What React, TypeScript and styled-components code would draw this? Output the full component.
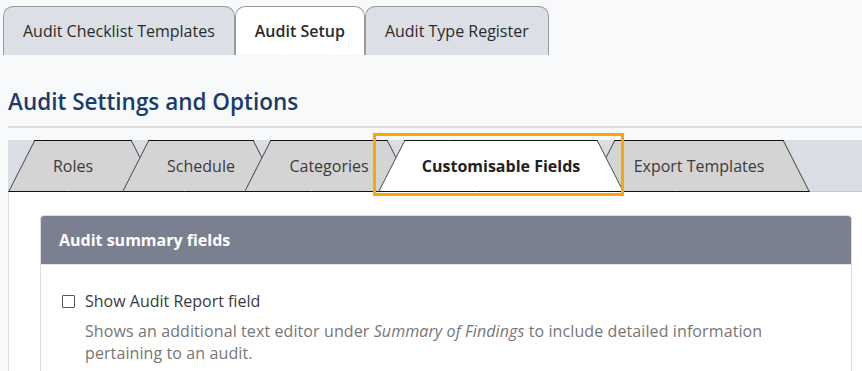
import React from 'react';
import styled, { createGlobalStyle } from 'styled-components';

const GlobalStyle = createGlobalStyle`
  html, body {
    margin: 0;
    overflow: hidden;
    background: #f8f9fb;
    font-family: 'Open Sans', 'Liberation Sans', sans-serif;
  }
`;

const Page = styled.div`
  width: 884px;
`;

const TopTabs = styled.nav`
  display: flex;
  padding: 6px 0 0 3px;
`;

const TopTab = styled.div<{ $active?: boolean }>`
  display: flex;
  align-items: center;
  height: 49px;
  box-sizing: border-box;
  padding: 0 19px;
  border: 1px solid #9a9a9a;
  border-bottom: none;
  border-radius: 10px 10px 0 0;
  background: ${(p) => (p.$active ? '#ffffff' : '#dcdfe6')};
  color: #2b2b2b;
  font-size: 16px;
  font-weight: ${(p) => (p.$active ? 600 : 400)};
`;

const Main = styled.main`
  padding-left: 8px;
`;

const Heading = styled.h1`
  margin: 32px 0 0;
  font-size: 22.5px;
  line-height: 30px;
  font-weight: 600;
  color: #1b3b6b;
`;

const Rule = styled.div`
  height: 2px;
  margin-top: 9px;
  background: #dedede;
`;

const SubTabStrip = styled.div`
  display: flex;
  height: 52px;
  margin-top: 12px;
  background: #dadde4;
  box-shadow: inset 0 -1px 0 #c9c9c9;
`;

const SubTab = styled.div<{ $width: number; $active?: boolean; $order: number }>`
  position: relative;
  z-index: ${(p) => (p.$active ? 20 : p.$order)};
  display: flex;
  align-items: center;
  justify-content: center;
  box-sizing: border-box;
  width: ${(p) => p.$width}px;
  height: 52px;
  margin-left: -36px;
  padding-bottom: 1px;
  font-size: 16px;
  font-weight: ${(p) => (p.$active ? 700 : 400)};
  color: ${(p) => (p.$active ? '#222' : '#3a3a3a')};

  &:first-child {
    margin-left: 0;
    padding-right: 20px;
  }

  &::before,
  &::after {
    content: '';
    position: absolute;
    z-index: -1;
    top: 0;
    bottom: 0;
    width: 60%;
    box-sizing: border-box;
    background: ${(p) => (p.$active ? '#ffffff' : '#d4d4d4')};
    border-top: 1px solid #111;
    border-bottom: 1px solid #111;
  }

  &::before {
    left: 0;
    transform-origin: bottom left;
    transform: skewX(-27deg);
    border-left: 1px solid #444;
  }

  &::after {
    right: 0;
    transform-origin: bottom right;
    transform: skewX(27deg);
    border-right: 1px solid #444;
  }
`;

const Highlight = styled.span`
  position: absolute;
  left: -5px;
  top: -7px;
  width: 251px;
  height: 63px;
  box-sizing: border-box;
  border: 3px solid #ffa500;
  pointer-events: none;
`;

const Panel = styled.section`
  background: #ffffff;
  border-left: 1px solid #dddddd;
  padding: 23px 32px 40px 31px;
`;

const Card = styled.div`
  border: 1px solid #dcdcdc;
  border-radius: 4px 4px 0 0;
  overflow: hidden;
  background: #ffffff;
`;

const CardHeader = styled.div`
  display: flex;
  align-items: center;
  height: 48px;
  padding: 0 18px;
  background: #7a8090;
  color: #ffffff;
  font-size: 16px;
  font-weight: 700;
  border-bottom: 1px solid #e2e2e2;
`;

const CardBody = styled.div`
  padding: 25px 21px;
`;

const OptionRow = styled.label`
  display: flex;
  align-items: center;
  gap: 10px;
  font-size: 16px;
  line-height: 22px;
  color: #3a3a3a;
`;

const Checkbox = styled.input`
  appearance: none;
  width: 13px;
  height: 13px;
  margin: 0;
  border: 1px solid #555;
  border-radius: 1px;
  background: #fff;
`;

const Description = styled.p`
  margin: 8px 0 0 23px;
  font-size: 16px;
  line-height: 22px;
  letter-spacing: 0.1px;
  color: #767676;
`;

const subTabs = [
  { label: 'Roles', width: 150 },
  { label: 'Schedule', width: 158 },
  { label: 'Categories', width: 170 },
  { label: 'Customisable Fields', width: 246, active: true },
  { label: 'Export Templates', width: 222 },
];

export default function App() {
  return (
    <Page>
      <GlobalStyle />
      <TopTabs>
        <TopTab>Audit Checklist Templates</TopTab>
        <TopTab $active>Audit Setup</TopTab>
        <TopTab>Audit Type Register</TopTab>
      </TopTabs>
      <Main>
        <Heading>Audit Settings and Options</Heading>
        <Rule />
        <SubTabStrip>
          {subTabs.map((t, i) => (
            <SubTab key={t.label} $width={t.width} $active={t.active} $order={i + 1}>
              {t.label}
              {t.active && <Highlight />}
            </SubTab>
          ))}
        </SubTabStrip>
        <Panel>
          <Card>
            <CardHeader>Audit summary fields</CardHeader>
            <CardBody>
              <OptionRow>
                <Checkbox type="checkbox" />
                Show Audit Report field
              </OptionRow>
              <Description>
                Shows an additional text editor under <em>Summary of Findings</em> to include detailed
                information pertaining to an audit.
              </Description>
            </CardBody>
          </Card>
        </Panel>
      </Main>
    </Page>
  );
}
